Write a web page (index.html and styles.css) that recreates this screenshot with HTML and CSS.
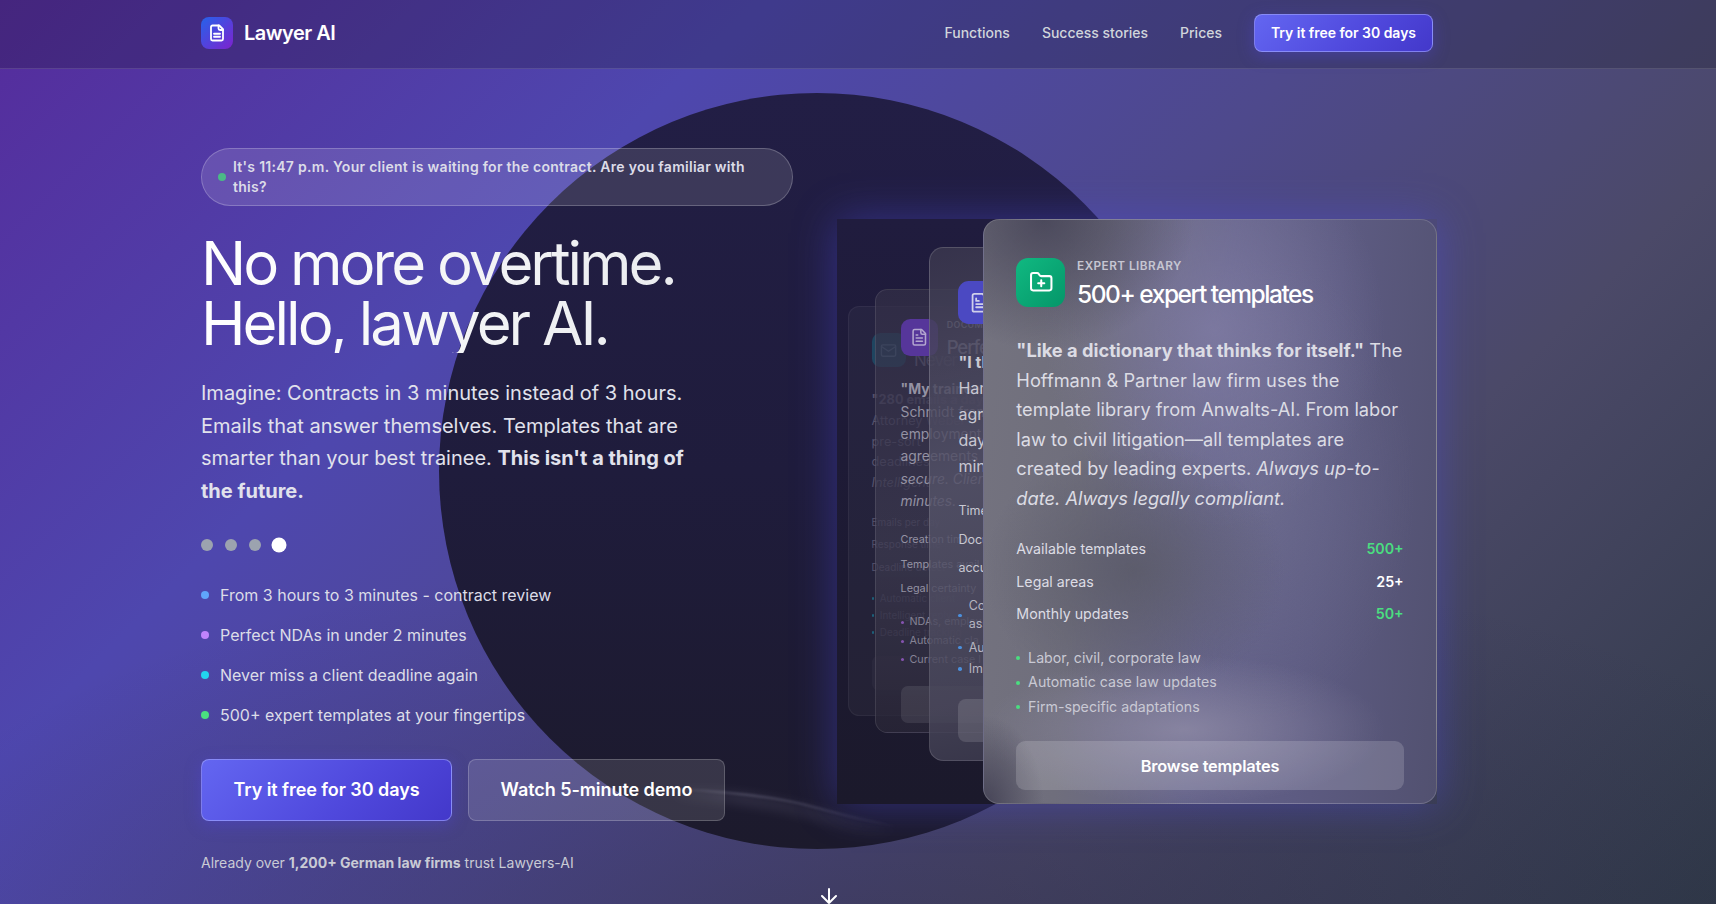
FILE: index.html
```html
<!DOCTYPE html>
<html lang="en">
<head>
<meta charset="utf-8">
<title>Lawyer AI</title>
<link rel="stylesheet" href="styles.css">
</head>
<body>
<div class="orb"></div>
<svg class="streak" viewBox="0 0 240 80">
  <defs><linearGradient id="fade" gradientUnits="userSpaceOnUse" x1="0" y1="0" x2="240" y2="0"><stop offset="0" stop-color="#a09eb8" stop-opacity="0"/><stop offset=".35" stop-color="#a09eb8" stop-opacity=".25"/><stop offset=".7" stop-color="#a09eb8" stop-opacity=".16"/><stop offset="1" stop-color="#a09eb8" stop-opacity="0"/></linearGradient></defs>
  <path class="streak-haze" d="M20 12C75 14 120 22 155 32S205 46 238 50"/>
  <path class="streak-core" d="M20 7C70 10 120 16 150 24S200 38 235 44"/>
</svg>
<header class="header">
  <div class="header-inner">
    <a class="brand"><span class="brand-icon"><svg viewBox="0 0 24 24"><path d="M15 2H6a2 2 0 0 0-2 2v16a2 2 0 0 0 2 2h12a2 2 0 0 0 2-2V7z"/><path d="M14 2v4a2 2 0 0 0 2 2h4M16 13H8M16 17H8"/></svg></span>Lawyer AI</a>
    <nav class="nav">
      <a>Functions</a><a>Success stories</a><a>Prices</a>
      <a class="btn btn-primary btn-small">Try it free for 30 days</a>
    </nav>
  </div>
</header>
<main class="hero">
  <section class="copy">
    <div class="pill"><i></i><span>It's 11:47 p.m. Your client is waiting for the contract. Are you familiar with<br>this?</span></div>
    <h1 class="title">No more overtime.<br>Hello, lawyer AI.</h1>
    <p class="lead">Imagine: Contracts in 3 minutes instead of 3 hours. Emails that answer themselves. Templates that are smarter than your best trainee. <b>This isn't a thing of the future.</b></p>
    <div class="dots"><i></i><i></i><i></i><i class="on"></i></div>
    <ul class="points">
      <li class="blue">From 3 hours to 3 minutes - contract review</li>
      <li class="purple">Perfect NDAs in under 2 minutes</li>
      <li class="cyan">Never miss a client deadline again</li>
      <li class="green">500+ expert templates at your fingertips</li>
    </ul>
    <div class="actions"><a class="btn btn-primary btn-large">Try it free for 30 days</a><a class="btn btn-glass btn-large">Watch 5-minute demo</a></div>
    <p class="trust">Already over <b>1,200+ German law firms</b> trust Lawyers-AI</p>
  </section>
  <section class="deck">
    <article class="card card-email">
      <div class="card-head"><span class="card-icon"><svg viewBox="0 0 24 24"><rect x="2" y="4" width="20" height="16" rx="2"/><path d="m3 7 9 6 9-6"/></svg></span><div><h3>Never</h3></div></div>
      <p class="quote"><b>"280 emails a day</b><br>Attorney Weber<br>pre-sort<br>deadlines<br><em>Intelligent</em></p>
      <dl class="stats"><div><dt>Emails per day</dt></div><div><dt>Response time</dt></div><div><dt>Deadline detect</dt></div></dl>
      <ul class="features"><li>Automatic client</li><li>Intelligent reply</li><li>Deadline tracking</li></ul>
      <a class="card-btn"></a>
    </article>
    <article class="card card-docs">
      <div class="card-head"><span class="card-icon"><svg viewBox="0 0 24 24"><path d="M15 2H6a2 2 0 0 0-2 2v16a2 2 0 0 0 2 2h12a2 2 0 0 0 2-2V7z"/><path d="M14 2v4a2 2 0 0 0 2 2h4M10 9H8M16 13H8M16 17H8"/></svg></span><div><small>Document</small><h3>Perfect</h3></div></div>
      <p class="quote"><b>"My trainee</b><br>Schmidt from<br>employment<br>agreements<br><em>secure. Client<br>minutes.</em></p>
      <dl class="stats"><div><dt>Creation time</dt></div><div><dt>Templates avail</dt></div><div><dt>Legal certainty</dt></div></dl>
      <ul class="features"><li>NDAs, employ</li><li>Automatic cla</li><li>Current case l</li></ul>
      <a class="card-btn"></a>
    </article>
    <article class="card card-review">
      <div class="card-head"><span class="card-icon"><svg viewBox="0 0 24 24"><path d="M15 2H6a2 2 0 0 0-2 2v16a2 2 0 0 0 2 2h12a2 2 0 0 0 2-2V7z"/><path d="M8 7v3h3M16 13.500H8M16 17H8"/></svg></span></div>
      <p class="quote"><b>"I th</b><br>Ham<br>agre<br>days<br>minu</p>
      <dl class="stats"><div><dt>Time</dt></div><div><dt>Docu</dt></div><div><dt>accu</dt></div></dl>
      <ul class="features"><li class="two-line">Con<br>ass</li><li>Aut</li><li>Imp</li></ul>
      <a class="card-btn"></a>
    </article>
    <article class="card card-active">
      <div class="card-head"><span class="card-icon"><svg viewBox="0 0 24 24"><path d="M12 10v6M9 13h6M20 20a2 2 0 0 0 2-2V8a2 2 0 0 0-2-2h-7.900a2 2 0 0 1-1.700-.9L9.600 3.900A2 2 0 0 0 7.900 3H4a2 2 0 0 0-2 2v13a2 2 0 0 0 2 2Z"/></svg></span><div><small>Expert library</small><h3>500+ expert templates</h3></div></div>
      <p class="quote"><b>"Like a dictionary that thinks for itself."</b> The<br>Hoffmann &amp; Partner law firm uses the<br>template library from Anwalts-AI. From labor<br>law to civil litigation—all templates are<br>created by leading experts. <em>Always up-to-<br>date. Always legally compliant.</em></p>
      <dl class="stats"><div><dt>Available templates</dt><dd class="good">500+</dd></div><div><dt>Legal areas</dt><dd>25+</dd></div><div><dt>Monthly updates</dt><dd class="good">50+</dd></div></dl>
      <ul class="features"><li>Labor, civil, corporate law</li><li>Automatic case law updates</li><li>Firm-specific adaptations</li></ul>
      <a class="card-btn">Browse templates</a>
    </article>
  </section>
</main>
<svg class="scroll" viewBox="0 0 24 20"><path d="M12 5v14M19 12l-7 7-7-7"/></svg>
</body>
</html>
```
FILE: styles.css
```css
* { box-sizing: border-box; }
body {
  margin: 0; height: 904px; overflow: hidden; position: relative;
  font-family: Inter, "Liberation Sans", sans-serif; color: #fff;
  background:
    radial-gradient(ellipse 1100px 420px at 900px 960px, rgba(30,28,62,.32), transparent),
    linear-gradient(135deg, #552c9c 0%, #4e47ae 29%, #4e498c 52%, #4b4968 72%, #303948 100%);
}
h1, h3, p, ul, dl, dd { margin: 0; padding: 0; }
ul { list-style: none; }
svg { fill: none; stroke: currentColor; stroke-width: 2; stroke-linecap: round; stroke-linejoin: round; }
.orb { position: absolute; left: 439px; top: 93px; width: 756px; height: 756px; border-radius: 50%; background: linear-gradient(180deg, #221e45, #1f1c3c 50%, #1c1a2c); }
.streak { position: absolute; left: 660px; top: 782px; width: 240px; }
.streak path { stroke: url(#fade); }
.streak-core { stroke-width: 2.5; filter: blur(1px); }
.streak-haze { stroke-width: 14; filter: blur(5px); opacity: .5; }
.scroll { position: absolute; left: 817px; top: 884px; width: 24px; height: 20px; }
.header { position: relative; height: 69px; background: rgba(12,12,22,.22); border-bottom: 1px solid rgba(255,255,255,.12); }
.header-inner { width: 1232px; margin-left: 201px; height: 66px; display: flex; align-items: center; justify-content: space-between; }
.brand { display: flex; align-items: center; gap: 11px; font-size: 20px; font-weight: 600; letter-spacing: -.5px; }
.brand-icon { width: 32px; height: 32px; border-radius: 8px; background: linear-gradient(135deg, #2563eb, #7e22ce); display: grid; place-items: center; }
.brand-icon svg { width: 18px; stroke-width: 2.4; }
.nav { display: flex; align-items: center; gap: 32px; font-size: 14px; font-weight: 500; color: #d1d5db; }
.nav > a:not(.btn) { padding-bottom: 1px; }
.btn { display: flex; align-items: center; justify-content: center; border-radius: 8px; color: #fff; font-weight: 600; border: 1px solid rgba(255,255,255,.2); padding-bottom: 2px; }
.btn-primary { background: linear-gradient(135deg, #6366f1, #4f48dc 60%, #4338ca); border-color: rgba(165,170,255,.6); box-shadow: 0 4px 16px rgba(79,70,229,.35); }
.btn-glass { background: rgba(255,255,255,.12); }
.btn-small { width: 179px; height: 38px; letter-spacing: -.03px; }
.hero { position: relative; margin-left: 201px; width: 1236px; display: flex; justify-content: space-between; }
.copy { width: 592px; padding-top: 79px; }
.pill { height: 58px; border: 1px solid rgba(255,255,255,.22); border-radius: 29px; background: rgba(255,255,255,.12); display: flex; align-items: center; gap: 7px; padding: 0 16px; font-size: 14px; line-height: 20px; font-weight: 600; letter-spacing: .28px; color: #dcdce8; white-space: nowrap; }
.pill i { flex: none; width: 8px; height: 8px; border-radius: 50%; background: #4bb987; }
.title { margin-top: 27px; font-size: 60px; line-height: 60px; font-weight: 400; letter-spacing: -3px; color: transparent; background: linear-gradient(90deg, #fff, #e5e7eb); background-clip: text; }
.lead { width: 500px; margin-top: 24px; font-size: 20px; line-height: 32.5px; color: #e1e2ec; }
.dots { display: flex; align-items: center; gap: 12px; height: 16px; margin-top: 30px; }
.dots i { width: 12px; height: 12px; border-radius: 50%; background: #9ca3af; }
.dots .on { background: #fff; transform: scale(1.25); }
.points { margin-top: 30px; display: grid; gap: 16px; font-size: 16px; line-height: 24px; color: #dcdde8; }
.points li { display: flex; align-items: center; gap: 11px; }
.points li::before { content: ""; width: 8px; height: 8px; border-radius: 50%; background: #60a5fa; }
.points .purple::before { background: #c084fc; }
.points .cyan::before { background: #22d3ee; }
.points .green::before { background: #4ade80; }
.actions { display: flex; gap: 16px; margin-top: 32px; }
.btn-large { height: 62px; width: 251px; font-size: 18px; letter-spacing: -.06px; }
.btn-glass.btn-large { width: 257px; }
.trust { margin-top: 32px; font-size: 14px; line-height: 20px; color: #c9cbd5; }
.deck { position: relative; width: 600px; height: 585px; margin-top: 150px; box-shadow: 0 0 40px rgba(79,76,229,.42); }
.deck::before { content: ""; position: absolute; inset: 0; background: linear-gradient(#201c3e, #1b192b); clip-path: inset(0 440px 0 0); }
.card { position: absolute; overflow: hidden; border: 1px solid rgba(255,255,255,.14); border-radius: 1em; padding: 2.3em 1.98em 0; color: #dcdce4; }
.card-head { display: flex; gap: .72em; height: 3em; }
.card-icon { flex: none; width: 3em; height: 3em; border-radius: .75em; display: grid; place-items: center; color: #fff; }
.card-icon svg { width: 1.5em; }
.card small { display: block; font-size: .72em; line-height: 1.4em; font-weight: 600; text-transform: uppercase; letter-spacing: .04em; margin-top: 0; color: #c6c6d2; }
.card h3 { font-size: 1.5em; line-height: 1.3em; font-weight: 500; letter-spacing: -.06em; color: #fff; margin-top: .2em; white-space: nowrap; }
.quote { margin-top: 1.62em; font-size: 1.118em; line-height: 1.619em; white-space: nowrap; }
.stats { margin-top: 1.16em; }
.stats div { display: flex; justify-content: space-between; height: 1.985em; align-items: center; white-space: nowrap; }
.stats dt, .stats dd { font-size: .872em; }
.stats dd { color: #fff; font-weight: 600; }
.stats .good { color: #4ade80; }
.features { margin-top: 1.14em; font-size: .87em; line-height: 1.725em; color: #c9c9d4; white-space: nowrap; }
.features li { position: relative; padding-left: .83em; }
.features li::before { content: ""; position: absolute; left: 0; top: calc(50% - .14em); width: .28em; height: .28em; border-radius: 50%; background: #4ade80; }
.card-btn { margin-top: 1.34em; height: 3em; border-radius: .55em; display: flex; align-items: center; justify-content: center; background: rgba(255,255,255,.16); color: #fff; font-weight: 600; letter-spacing: -.01em; }
.card-active { left: 146px; top: 0; width: 454px; height: 585px; font-size: 16.33px; border-color: rgba(255,255,255,.16);
  background:
    radial-gradient(ellipse 150px 130px at 60px 0, rgba(66,64,84,.8), transparent),
    radial-gradient(ellipse 60px 90px at 0 585px, rgba(58,56,76,.8), transparent),
    radial-gradient(ellipse 200px 75px at 200px 510px, rgba(146,142,168,.75), transparent),
    radial-gradient(ellipse 150px 130px at 150px 350px, rgba(90,90,104,.85), transparent),
    radial-gradient(ellipse 170px 200px at 230px 110px, rgba(130,126,166,.75), transparent),
    radial-gradient(ellipse 150px 230px at 280px 270px, rgba(114,114,146,.55), transparent),
    linear-gradient(95deg, #74737f 0%, #6f6e7c 24%, #65638a 50%, #5d5b82 72%, #525170 100%); }
.card-active .card-icon { background: linear-gradient(135deg, #10b981, #059669); }
.card-review { left: 92px; top: 28px; width: 400px; height: 514px; font-size: 14.35px; color: #c8c8d2; background: linear-gradient(165deg, rgba(60,57,79,.8), rgba(84,82,104,.84) 40%, rgba(72,70,90,.84) 75%, rgba(48,45,64,.85)); }
.card-review .card-icon { background: #4b49c2; color: #d0d0ea; }
.card-review .stats { margin-top: 1.15em; }
.card-review .features { color: #b5b5c1; margin-top: 1.25em; }
.card-review .features li::before { background: #4b8fdc; }
.card-review .two-line { line-height: 1.43em; margin: .15em 0 .3em; }
.card-review .card-btn { background: rgba(255,255,255,.13); }
.card-docs { left: 38px; top: 70px; width: 345px; height: 444px; font-size: 12.4px; border-color: rgba(255,255,255,.1); color: #9492a3; background: linear-gradient(rgba(52,48,72,.7), rgba(62,59,80,.7) 60%, rgba(42,39,56,.75)); }
.card-docs .card-icon { background: #56369a; color: #b3a6cf; }
.card-docs small, .card-docs h3 { color: #9a98ab; }
.card-docs .features { color: #858395; }
.card-docs .features li::before { background: #8553b0; }
.card-docs .card-btn { background: rgba(255,255,255,.09); }
.card-email { left: 11px; top: 87px; width: 318px; height: 410px; font-size: 11.4px; border-color: rgba(255,255,255,.05); color: #55526d; background: rgba(255,255,255,.035); }
.card-email .card-icon { background: #1f4560; color: #496b85; }
.card-email h3 { color: #6b6882; margin-top: .9em; font-weight: 400; }
.card-email .quote { margin-top: 1.8em; }
.card-email .stats { margin-top: 1.48em; }
.card-email .features { color: #4b4862; }
.card-email .features li::before { background: #1c5f78; }
.card-email .card-btn { background: rgba(255,255,255,.03); }
```
